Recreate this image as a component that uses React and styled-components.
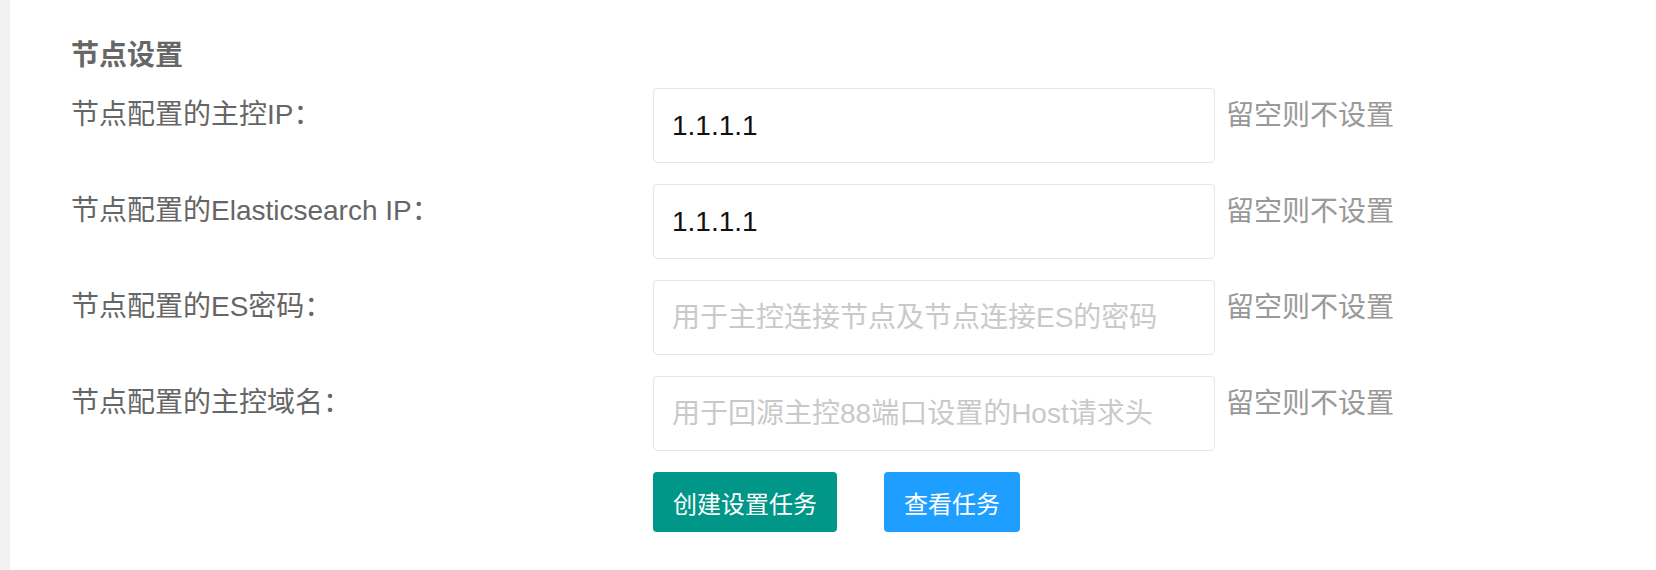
import React from "react";
import styled, { createGlobalStyle } from "styled-components";

const GlobalStyle = createGlobalStyle`
	html, body {
		margin: 0;
		padding: 0;
		background-color: #FFFFFF;
	}

	body {
		font-family: "Liberation Sans", "Noto Sans CJK SC", sans-serif;
	}
`;

const Page = styled.div`
	display: flex;
	min-height: 570px;
`;

const SideStrip = styled.div`
	width: 10px;
	flex-shrink: 0;
	background-color: #F2F2F2;
`;

const Content = styled.div`
	flex: 1;
	padding: 36px 0 0 61px;
`;

const Title = styled.div`
	margin-bottom: 12px;

	font-size: 28px;
	font-weight: 700;
	line-height: 40px;
	color: #666666;
`;

const FormRow = styled.div`
	margin-bottom: 21px;

	display: flex;
	align-items: flex-start;
`;

const Label = styled.label`
	padding-top: 7px;

	width: 582px;
	flex-shrink: 0;

	font-size: 28px;
	line-height: 40px;
	color: #666666;
`;

const TextInput = styled.input`
	box-sizing: border-box;
	padding: 0 18px;

	width: 562px;
	height: 75px;

	border: 1px solid #E6E6E6;
	border-radius: 4px;
	outline: none;
	background-color: #FFFFFF;

	font-family: "Liberation Sans", "Noto Sans CJK SC", sans-serif;
	font-size: 28px;
	color: #111111;

	&::placeholder {
		color: #C9C9C9;
	}
`;

const HelpText = styled.div`
	margin-left: 11px;
	padding-top: 8px;

	font-size: 28px;
	line-height: 40px;
	color: #999999;
`;

const ButtonRow = styled.div`
	margin-left: 582px;

	display: flex;
	gap: 47px;
`;

const Button = styled.button`
	padding: 0 20px;
	height: 60px;

	border: none;
	border-radius: 4px;
	background-color: ${(p) => (p.$variant === "normal" ? "#1E9FFF" : "#009688")};

	font-family: "Liberation Sans", "Noto Sans CJK SC", sans-serif;
	font-size: 24px;
	color: #FFFFFF;
	white-space: nowrap;
	cursor: pointer;
`;

const fields = [
	{ label: "节点配置的主控IP：", value: "1.1.1.1" },
	{ label: "节点配置的Elasticsearch IP：", value: "1.1.1.1" },
	{ label: "节点配置的ES密码：", placeholder: "用于主控连接节点及节点连接ES的密码" },
	{ label: "节点配置的主控域名：", placeholder: "用于回源主控88端口设置的Host请求头" },
];

export default function App() {
	return (
		<Page>
			<GlobalStyle />
			<SideStrip />
			<Content>
				<Title>节点设置</Title>
				{fields.map((f) => (
					<FormRow key={f.label}>
						<Label>{f.label}</Label>
						<TextInput defaultValue={f.value} placeholder={f.placeholder} />
						<HelpText>留空则不设置</HelpText>
					</FormRow>
				))}
				<ButtonRow>
					<Button>创建设置任务</Button>
					<Button $variant="normal">查看任务</Button>
				</ButtonRow>
			</Content>
		</Page>
	);
}
